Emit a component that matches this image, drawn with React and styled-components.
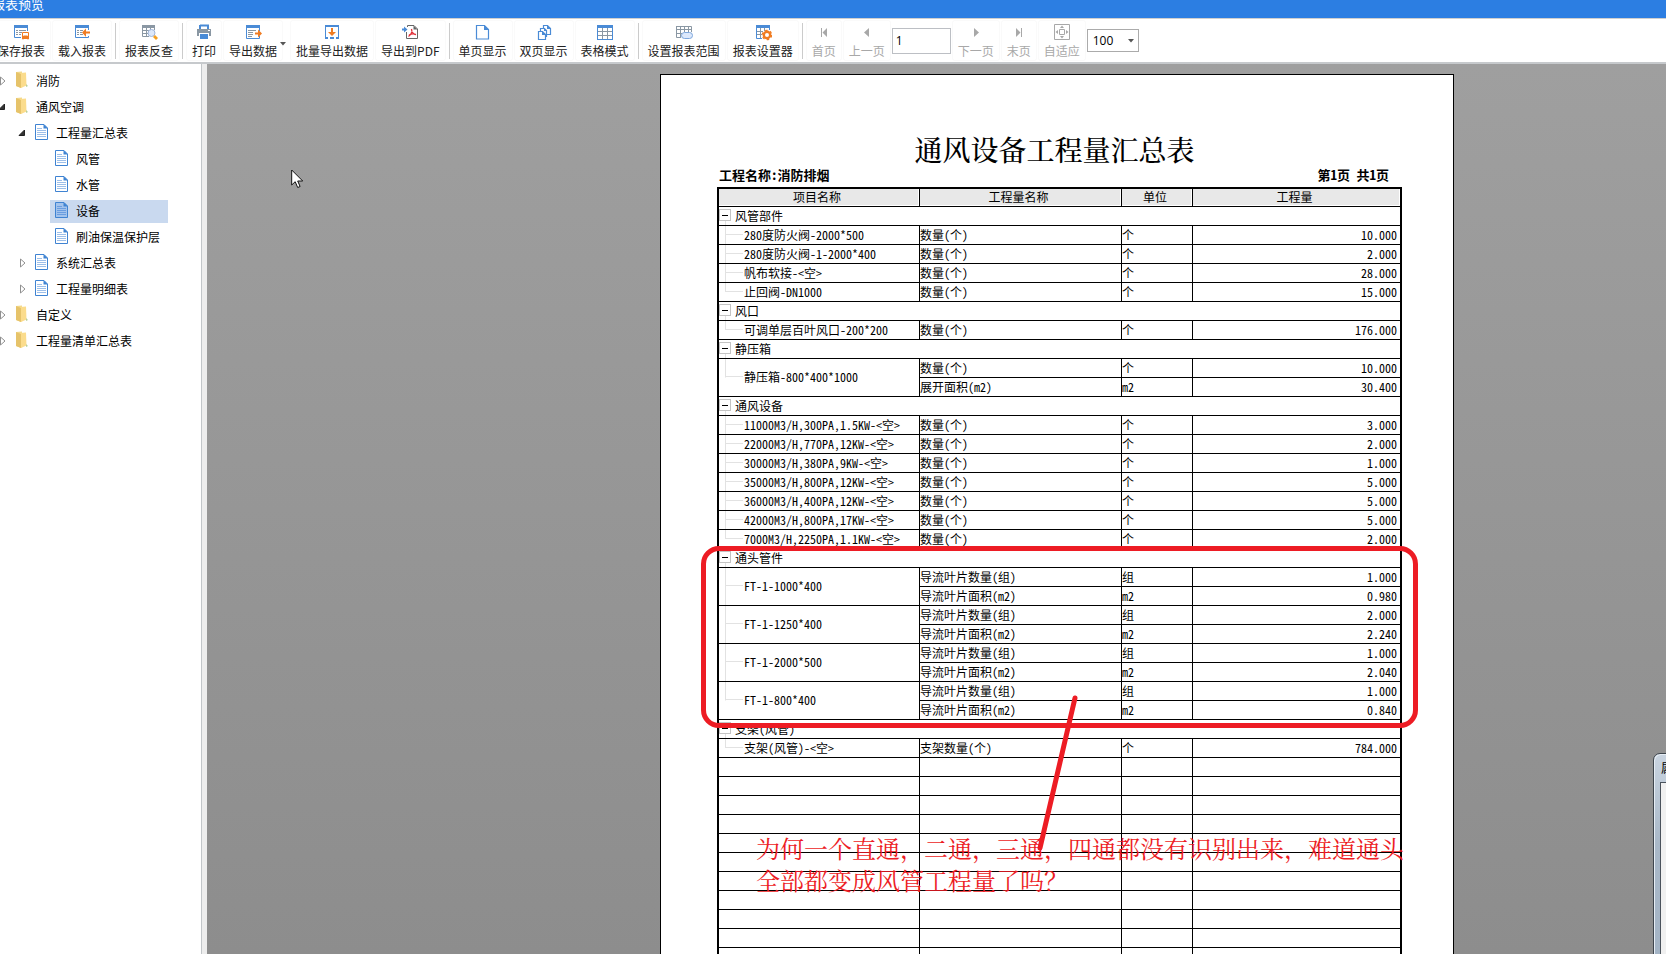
import { useState } from 'react';
import styled, { createGlobalStyle } from 'styled-components';

const GlobalStyle = createGlobalStyle`
* {
    box-sizing: border-box;
}
body {
    margin: 0;
    overflow: hidden;
    font-family: "Noto Sans CJK SC", sans-serif;
    font-size: 12px;
    color: #000;
}
button, input, select {
    font-family: inherit;
    font-size: 12px;
    color: inherit;
    margin: 0;
}
`;

const Screen = styled.div`
display: flex;
flex-direction: column;
height: 100vh;
position: relative;
overflow: hidden;
`;

const TitleBar = styled.header`
flex: none;
height: 18px;
background: #2c7ee2;
color: #fff;
font-size: 13px;
line-height: 18px;
overflow: hidden;

& span {
    display: block;
    margin: -5px 0 0 -8px;
}
`;

const Toolbar = styled.nav`
flex: none;
display: flex;
align-items: center;
gap: 1px;
height: 46px;
background: #fff;
border-top: 1px solid #cfcfcf;
border-bottom: 2px solid #c6c9cc;
white-space: nowrap;
overflow: hidden;

& > button:first-child {
    margin-left: -9px;
}
`;

const ToolButton = styled.button`
flex: none;
display: flex;
flex-direction: column;
align-items: center;
gap: 1px;
height: 41px;
padding: 4px 6px 0;
border: 0;
border-radius: 3px;
background: #fff;
box-shadow: inset 0 0 0 1px #fafafa;
color: ${(props) => (props.disabled ? '#a8a8a8' : '#222')};
line-height: 18px;

& svg {
    display: block;
}
`;

const DropButton = styled.div`
flex: none;
display: flex;
align-items: center;
width: 66px;

& > button:last-child {
    width: 13px;
    height: 41px;
    margin-left: -6px;
    padding: 0;
    border: 0;
    background: none;
}
`;

const Divider = styled.i`
flex: none;
width: 1px;
height: 36px;
margin: 0 2px;
background: #cbcbcb;
`;

const PageInput = styled.input`
flex: none;
width: 59px;
height: 26px;
padding: 0 3px;
border: 1px solid #bcbfc4;
background: #fff;
&& {
    font-family: "Open Sans", sans-serif;
}
`;

const ZoomSelect = styled.label`
flex: none;
display: flex;
align-items: center;
width: 52px;
height: 23px;
padding-right: 4px;
border: 1px solid #ababab;

& select {
    flex: 1;
    min-width: 0;
    padding: 0 0 0 5px;
    border: 0;
    appearance: none;
    background: none;
    font-family: "Open Sans", sans-serif;
}
`;

const Main = styled.div`
flex: 1;
display: flex;
min-height: 0;
`;

const Sidebar = styled.aside`
flex: none;
width: 207px;
padding-top: 4px;
background: #fff;
border-right: 5px solid #ededed;
box-shadow: inset -1px 0 #c2c6c9;
overflow: hidden;
`;

const TreeItem = styled.div`
display: flex;
align-items: center;
height: 26px;
margin-left: ${(props) => props.$level * 20 - 4}px;
white-space: nowrap;
`;

const Expander = styled.button`
flex: none;
width: 14px;
height: 14px;
padding: 0;
border: 0;
background: none;
visibility: ${(props) => (props.$leaf ? 'hidden' : 'visible')};

& svg {
    display: block;
}
`;

const NodeLabel = styled.a`
display: flex;
align-items: center;
gap: 8px;
height: 23px;
width: ${(props) => (props.$selected ? '118px' : 'auto')};
padding: 0 0 2px 5px;
background: ${(props) => (props.$selected ? '#c9d9ef' : 'transparent')};
color: #000;
text-decoration: none;

& svg {
    flex: none;
}
`;

const Viewer = styled.main`
flex: 1;
display: grid;
grid-template-columns: minmax(0, 1fr) 794px 212px;
align-items: start;
min-width: 0;
padding-top: 10px;
overflow: hidden;
background: linear-gradient(#9f9f9f, #8d8d8d);
`;

const Paper = styled.section`
grid-column: 2;
position: relative;
height: 1123px;
padding: 56px 51px 0 56px;
border: 1px solid #000;
background: #fff;
overflow: hidden;
`;

const Title = styled.h1`
margin: 0;
padding-right: 10px;
font-family: "Noto Serif CJK SC", "Noto Sans CJK SC", serif;
font-size: 28px;
font-weight: 500;
line-height: 36px;
text-align: center;
`;

const Info = styled.div`
display: flex;
justify-content: space-between;
padding: 0 13px 4px 2px;
font-family: "Noto Sans Mono CJK SC", "Noto Sans CJK SC", monospace;
font-size: 13px;
font-weight: 700;
line-height: 16px;
white-space: pre;
`;

const Report = styled.table`
width: 100%;
table-layout: fixed;
border: 2px solid #000;
border-collapse: separate;
border-spacing: 0;
font-family: "Noto Sans Mono CJK SC", "Noto Sans CJK SC", monospace;
font-size: 12px;
line-height: 18px;
white-space: nowrap;

& th {
    height: 18px;
    padding: 0 4px 2px 0;
    border-right: 1px solid #000;
    border-bottom: 1px solid #000;
    background: #e8e8e8;
    box-shadow: inset -1px -1px #fff;
    font-weight: 400;
    line-height: 15px;
}
& td {
    height: 19px;
    padding: 0;
    border-right: 1px solid #000;
    border-bottom: 1px solid #000;
}
& th:last-child, & td:last-child {
    border-right: 0;
}
`;

const GroupCell = styled.td`
background: linear-gradient(#e2e2e2, #e2e2e2) 6px 100% / 1px 4px no-repeat;

& > div {
    display: flex;
    align-items: center;
    gap: 4px;
}
`;

const Toggle = styled.button`
display: flex;
align-items: center;
justify-content: center;
width: 12px;
height: 12px;
margin-bottom: 2px;
padding: 0;
border: 1px solid #c4c4c4;
background: #fff;

& i {
    width: 6px;
    height: 1px;
    background: #000;
}
`;

const NameCell = styled.td`
&& {
    padding-left: 25px;
    padding-bottom: ${(props) => (props.rowSpan > 1 ? 2 : 0)}px;
}
background-image: linear-gradient(#e2e2e2, #e2e2e2), linear-gradient(#e2e2e2, #e2e2e2);
background-repeat: no-repeat;
background-position: 6px 0, 6px calc(50% - 1px);
background-size: 1px ${(props) => (props.$last ? '50%' : '100%')}, 18px 1px;
`;

const AmountCell = styled.td`
&& {
    padding-right: 3px;
}
text-align: right;
`;

const RedFrame = styled.div`
position: absolute;
left: 40px;
top: 471px;
width: 717px;
height: 182px;
border: 5px solid #ed1c24;
border-radius: 18px;
pointer-events: none;
`;

const RedLine = styled.svg`
position: absolute;
left: 374px;
top: 618px;
pointer-events: none;
`;

const RedNote = styled.p`
position: absolute;
left: 95px;
top: 757px;
margin: 0;
font-family: "Noto Serif CJK SC", "Noto Sans CJK SC", serif;
font-size: 24px;
font-weight: 400;
line-height: 32px;
color: #ed1c24;
white-space: nowrap;
`;

const Pointer = styled.svg`
position: absolute;
left: 291px;
top: 169px;
`;

const Dialog = styled.section`
position: absolute;
right: -287px;
bottom: -100px;
width: 300px;
height: 301px;
padding: 0 6px 6px;
border: 1px solid #3f464e;
border-radius: 7px;
background: linear-gradient(#c9d4e0, #a9b8c8 30%, #9fb0c2);
box-shadow: inset 1px 1px #e6edf4;

& h2 {
    margin: 0;
    padding-left: 1px;
    font-size: 12px;
    font-weight: 400;
    line-height: 28px;
}
& div {
    height: 264px;
    border: 1px solid #4b535c;
    background: #f0f0f0;
}
`;

const BLUE = '#4a8bd6';
const ORANGE = '#f07c22';
const GRAY = '#8a97a3';

const ICONS = {
    save: <>
        <path d="M1 1h14v3H1z" fill={BLUE} />
        <path d="M1.5 3v10.500H8M14.500 3v4" fill="none" stroke={BLUE} />
        <path d="M3 6.500h2M6 6.500h7M3 8.500h2M6 8.500h3M3 10.500h2M6 10.500h2" stroke={GRAY} />
        <path d="M9.500 15V8.500h6V15h-1v-3h-4v3z" fill="#fff" stroke={ORANGE} />
        <path d="M11 12h3v3h-3z" fill={ORANGE} />
    </>,
    load: <>
        <path d="M1 1h14v3H1z" fill={BLUE} />
        <path d="M1.500 3v10.500h13V12M14.500 3v3" fill="none" stroke={BLUE} />
        <path d="M3 6.500h2M6 6.500h3M3 8.500h2M6 8.500h2M3 10.500h2M6 10.500h3" stroke={GRAY} />
        <path d="M8 8.500l4-4V7.500h4v2h-4V13z" fill={ORANGE} />
    </>,
    search: <>
        <path d="M1 1h13v3H1z" fill={GRAY} />
        <path d="M1.500 3v9.500H8M13.500 3v3M1 6.500h7M1 9.500h6M5.500 3v9M9.500 3v3" fill="none" stroke={GRAY} />
        <circle cx="10.500" cy="9" r="3.500" fill="#dce8fb" stroke="#9fb4d8" />
        <path d="M12 13l2-2 3 3-2 2z" fill="#f5a020" />
    </>,
    print: <>
        <path d="M4 1.500h8V5M4 1v4" fill="none" stroke={BLUE} strokeWidth="2" />
        <path d="M1 5h14v7h-2V9H3v3H1z" fill={GRAY} />
        <path d="M4 10h8v5H4z" fill={BLUE} />
        <path d="M12 6.500h2" stroke="#fff" />
    </>,
    exportData: <>
        <path d="M1 1h14v3H1z" fill={BLUE} />
        <path d="M1.500 3v11.500h13V12M14.500 3v4" fill="none" stroke={BLUE} />
        <path d="M3 6.500h8M3 8.500h5M3 10.500h5M3 12.500h4" stroke={GRAY} />
        <path d="M17 9.500l-4-4v3h-3v2h3v3z" fill={ORANGE} />
    </>,
    batch: <>
        <path d="M1 1h14v2H1zM1 13h3v2H1zM6 13h4v2H6zM12 13h3v2h-3z" fill={BLUE} />
        <path d="M1.500 1v13M14.500 1v13" stroke={BLUE} />
        <path d="M7 4h2v4h3l-4 4-4-4h3z" fill={ORANGE} />
    </>,
    pdf: <>
        <path d="M4.500 8v6.500h11V5L12 1.500H5.500V3" fill="none" stroke="#666" />
        <path d="M11.500 1.500v4h4z" fill="#666" />
        <path d="M0 4.500h2V2.500l3.500 3-3.500 3v-2H0z" fill={BLUE} />
        <path d="M9.500 5c1 3-1 6-3 7.500M9.500 5c0 3 2 5.500 4.500 5.500M7 11c2-1 4.500-1.500 7-.5" fill="none" stroke="#e2303a" strokeWidth="1.300" />
    </>,
    single: <>
        <path d="M1.500 1.500h8l4 4v9.500h-12z" fill="#fff" stroke={BLUE} strokeWidth="1.200" />
        <path d="M9 1v5h5z" fill={BLUE} />
    </>,
    double: <>
        <path d="M7.500 1.500h4l3 3v6h-7z" fill="#fff" stroke={BLUE} strokeWidth="1.200" />
        <path d="M4.500 4.500h4l2 2v6h-6z" fill="#fff" stroke={BLUE} strokeWidth="1.200" />
        <path d="M2.500 7.500h4l3 3v5h-7z" fill="#fff" stroke={BLUE} strokeWidth="1.200" />
        <path d="M11 1v4h4zM8 4v3h3zM6 7v4h4z" fill={BLUE} />
    </>,
    grid: <>
        <path d="M0 1h16v3H0z" fill={BLUE} />
        <path d="M.5 3v12.500h15V3M0 15.500h16" fill="none" stroke={BLUE} />
        <path d="M1 7.500h14M1 11.500h14M5.500 4v11M10.500 4v11" stroke={GRAY} />
    </>,
    range: <>
        <path d="M.5 2v11.500H5M.5 2.500h15V8M0 5.500h16M0 9.500h6M4.500 2v11M8.500 2v6M12.500 2v6" fill="none" stroke={GRAY} />
        <rect x="5.500" y="8.500" width="11" height="6" rx="3" fill="#dce8fb" stroke="#7da7dd" />
    </>,
    setting: <>
        <path d="M1 1h14v3H1z" fill={BLUE} />
        <path d="M1.500 3v11.500H7M14.500 3v3" fill="none" stroke={BLUE} />
        <path d="M2 7.500h6M2 10.500h5M5.500 4v10M9.500 4v3" stroke={GRAY} />
        <circle cx="12" cy="11" r="3.200" fill="#fff" stroke={ORANGE} strokeWidth="2.400" />
        <circle cx="12" cy="11" r="4.600" fill="none" stroke={ORANGE} strokeWidth="1.400" strokeDasharray="2.400 2.420" />
    </>,
    first: <path d="M5 4h1v9H5zM11 4v9L6.500 8.500z" fill="#a8a8a8" />,
    prev: <path d="M10 4v9L5 8.500z" fill="#a8a8a8" />,
    next: <path d="M6 4v9l5-4.500z" fill="#a8a8a8" />,
    last: <path d="M10 4h1v9h-1zM5 4v9l4.500-4.500z" fill="#a8a8a8" />,
    fit: <>
        <path d="M.5.500h15v15H.5zM5.500 5.500h5v5h-5z" fill="none" stroke="#a8a8a8" />
        <path d="M8 1.500L10 4H6zM8 14.500L10 12H6zM1.500 8L4 6v4zM14.500 8L12 6v4z" fill="#a8a8a8" />
    </>,
};

const Icon = ({ name }) => (
    <svg width="18" height="17" viewBox="-1 0 18 17" aria-hidden="true">{ICONS[name]}</svg>
)

const Caret = () => (
    <svg width="6" height="4" viewBox="0 0 6 4" aria-hidden="true"><path d="M0 0h6L3 3.500z" fill="#555" /></svg>
)

const FolderIcon = () => (
    <svg width="13" height="18" viewBox="0 0 13 18" aria-hidden="true">
        <path d="M1 1l6-.5v15L6 17l-5-2z" fill="#f3d98a" />
        <path d="M5 2l6-.5.500 13L6 17z" fill="#fbdc8c" />
        <path d="M1 1l5 2v14l-5-2z" fill="#e6c36a" />
        <path d="M11 13l2 2-2 1z" fill="#b9cf9a" />
    </svg>
)

const PageIcon = ({ selected }) => (
    <svg width="13" height="16" viewBox="0 0 13 16" aria-hidden="true">
        <path d="M.5.500H9L12.500 4v11.500H.5z" fill={selected ? '#a3c3ec' : '#fff'} stroke="#3f83d2" />
        <path d="M8.500 0v4.500H13z" fill="#3f83d2" />
        <path d="M2 4.500h5M2 6.500h9M2 8.500h9M2 10.500h9M2 12.500h9" stroke={selected ? '#6a9de0' : '#9dbfe9'} />
    </svg>
)

const tools = [
    { icon: 'save', text: '保存报表' },
    { icon: 'load', text: '载入报表' },
    null,
    { icon: 'search', text: '报表反查' },
    null,
    { icon: 'print', text: '打印' },
    { icon: 'exportData', text: '导出数据', drop: true },
    { icon: 'batch', text: '批量导出数据' },
    { icon: 'pdf', text: '导出到PDF' },
    null,
    { icon: 'single', text: '单页显示' },
    { icon: 'double', text: '双页显示' },
    { icon: 'grid', text: '表格模式' },
    null,
    { icon: 'range', text: '设置报表范围' },
    { icon: 'setting', text: '报表设置器' },
    null,
];

const tree = [
    { level: 0, text: '消防', state: 'closed' },
    { level: 0, text: '通风空调', state: 'open' },
    { level: 1, text: '工程量汇总表', state: 'open' },
    { level: 2, text: '风管' },
    { level: 2, text: '水管' },
    { level: 2, text: '设备' },
    { level: 2, text: '刷油保温保护层' },
    { level: 1, text: '系统汇总表', state: 'closed' },
    { level: 1, text: '工程量明细表', state: 'closed' },
    { level: 0, text: '自定义', state: 'closed' },
    { level: 0, text: '工程量清单汇总表', state: 'closed' },
];

const count = (value) => [['数量(个)', '个', value]];
const vanes = (amount, area) => [['导流叶片数量(组)', '组', amount], ['导流叶片面积(m2)', 'm2', area]];

const groups = [
    {
        name: '风管部件', items: [
            { name: '280度防火阀-2000*500', lines: count('10.000') },
            { name: '280度防火阀-1-2000*400', lines: count('2.000') },
            { name: '帆布软接-<空>', lines: count('28.000') },
            { name: '止回阀-DN1000', lines: count('15.000') },
        ]
    },
    { name: '风口', items: [{ name: '可调单层百叶风口-200*200', lines: count('176.000') }] },
    {
        name: '静压箱', items: [
            { name: '静压箱-800*400*1000', lines: [['数量(个)', '个', '10.000'], ['展开面积(m2)', 'm2', '30.400']] },
        ]
    },
    {
        name: '通风设备', items: [
            { name: '11000M3/H,300PA,1.5KW-<空>', lines: count('3.000') },
            { name: '22000M3/H,770PA,12KW-<空>', lines: count('2.000') },
            { name: '30000M3/H,380PA,9KW-<空>', lines: count('1.000') },
            { name: '35000M3/H,800PA,12KW-<空>', lines: count('5.000') },
            { name: '36000M3/H,400PA,12KW-<空>', lines: count('5.000') },
            { name: '42000M3/H,800PA,17KW-<空>', lines: count('5.000') },
            { name: '7000M3/H,2250PA,1.1KW-<空>', lines: count('2.000') },
        ]
    },
    {
        name: '通头管件', items: [
            { name: 'FT-1-1000*400', lines: vanes('1.000', '0.980') },
            { name: 'FT-1-1250*400', lines: vanes('2.000', '2.240') },
            { name: 'FT-1-2000*500', lines: vanes('1.000', '2.040') },
            { name: 'FT-1-800*400', lines: vanes('1.000', '0.840') },
        ]
    },
    { name: '支架(风管)', items: [{ name: '支架(风管)-<空>', lines: [['支架数量(个)', '个', '784.000']] }] },
];

const blankRows = [...new Array(18).keys()];

const Tool = ({ icon, text, disabled }) => (
    <ToolButton type="button" disabled={disabled}>
        <Icon name={icon} />
        {text}
    </ToolButton>
)

const ReportTable = () => {
    const [closed, setClosed] = useState([]);

    const toggle = (name) => {
        setClosed(closed.includes(name) ? closed.filter((item) => item !== name) : [...closed, name]);
    }

    return (
        <Report>
            <colgroup>
                <col width="201" />
                <col width="202" />
                <col width="71" />
                <col />
            </colgroup>
            <thead>
                <tr>
                    <th>项目名称</th>
                    <th>工程量名称</th>
                    <th>单位</th>
                    <th>工程量</th>
                </tr>
            </thead>
            {groups.map((group) => (
                <tbody key={group.name}>
                    <tr>
                        <GroupCell colSpan={4}>
                            <div>
                                <Toggle type="button" aria-label={group.name} onClick={() => toggle(group.name)}><i /></Toggle>
                                {group.name}
                            </div>
                        </GroupCell>
                    </tr>
                    {!closed.includes(group.name) && group.items.map((item, index) => item.lines.map((line, n) => (
                        <tr key={item.name + n}>
                            {n === 0 && (
                                <NameCell rowSpan={item.lines.length} $last={index === group.items.length - 1}>{item.name}</NameCell>
                            )}
                            <td>{line[0]}</td>
                            <td>{line[1]}</td>
                            <AmountCell>{line[2]}</AmountCell>
                        </tr>
                    )))}
                </tbody>
            ))}
            <tbody>
                {blankRows.map((row) => <tr key={row}><td /><td /><td /><td /></tr>)}
            </tbody>
        </Report>
    )
}

const App = () => {
    const [selected, setSelected] = useState('设备');
    const [page, setPage] = useState('1');

    return (
        <Screen>
            <GlobalStyle />
            <TitleBar><span>报表预览</span></TitleBar>
            <Toolbar>
                {tools.map((tool, index) => {
                    if (!tool) return <Divider key={index} />;
                    if (tool.drop) {
                        return (
                            <DropButton key={index}>
                                <Tool {...tool} />
                                <button type="button" aria-label="导出选项"><Caret /></button>
                            </DropButton>
                        )
                    }
                    return <Tool key={index} {...tool} />
                })}
                <Tool icon="first" text="首页" disabled />
                <Tool icon="prev" text="上一页" disabled />
                <PageInput aria-label="页码" value={page} onChange={(e) => setPage(e.target.value)} />
                <Tool icon="next" text="下一页" disabled />
                <Tool icon="last" text="末页" disabled />
                <Tool icon="fit" text="自适应" disabled />
                <ZoomSelect>
                    <select aria-label="缩放" defaultValue="100">
                        <option>50</option>
                        <option>100</option>
                        <option>200</option>
                    </select>
                    <Caret />
                </ZoomSelect>
            </Toolbar>
            <Main>
                <Sidebar>
                    {tree.map((node) => (
                        <TreeItem key={node.text} $level={node.level}>
                            <Expander type="button" aria-label={node.text} $leaf={!node.state}>
                                <svg width="14" height="14" viewBox="0 0 14 14" aria-hidden="true">
                                    {node.state === 'open'
                                        ? <path d="M8.500 4v5.500H3z" fill="#333" stroke="#222" />
                                        : <path d="M4.500 3v8L9 7z" fill="#fff" stroke="#909090" />}
                                </svg>
                            </Expander>
                            <NodeLabel href="#" $selected={selected === node.text} onClick={() => setSelected(node.text)}>
                                {node.level === 0 ? <FolderIcon /> : <PageIcon selected={selected === node.text} />}
                                {node.text}
                            </NodeLabel>
                        </TreeItem>
                    ))}
                </Sidebar>
                <Viewer>
                    <Paper>
                        <Title>通风设备工程量汇总表</Title>
                        <Info>
                            <span>工程名称:消防排烟</span>
                            <span>第1页 共1页</span>
                        </Info>
                        <ReportTable />
                        <RedFrame />
                        <RedNote>为何一个直通，二通，三通，四通都没有识别出来，难道通头<br />全部都变成风管工程量了吗？</RedNote>
                        <RedLine width="46" height="160" viewBox="0 0 46 160" aria-hidden="true">
                            <path d="M40 5L5 155" stroke="#ed1c24" strokeWidth="5" strokeLinecap="round" />
                        </RedLine>
                    </Paper>
                </Viewer>
            </Main>
            <Pointer width="14" height="20" viewBox="0 0 14 20" aria-hidden="true">
                <path d="M.7 1v15l3.500-3.300L6.700 18.500l2.400-1-2.400-5.500h5z" fill="#fff" stroke="#111" />
            </Pointer>
            <Dialog>
                <h2>属性</h2>
                <div />
            </Dialog>
        </Screen>
    )
}

export default App;
